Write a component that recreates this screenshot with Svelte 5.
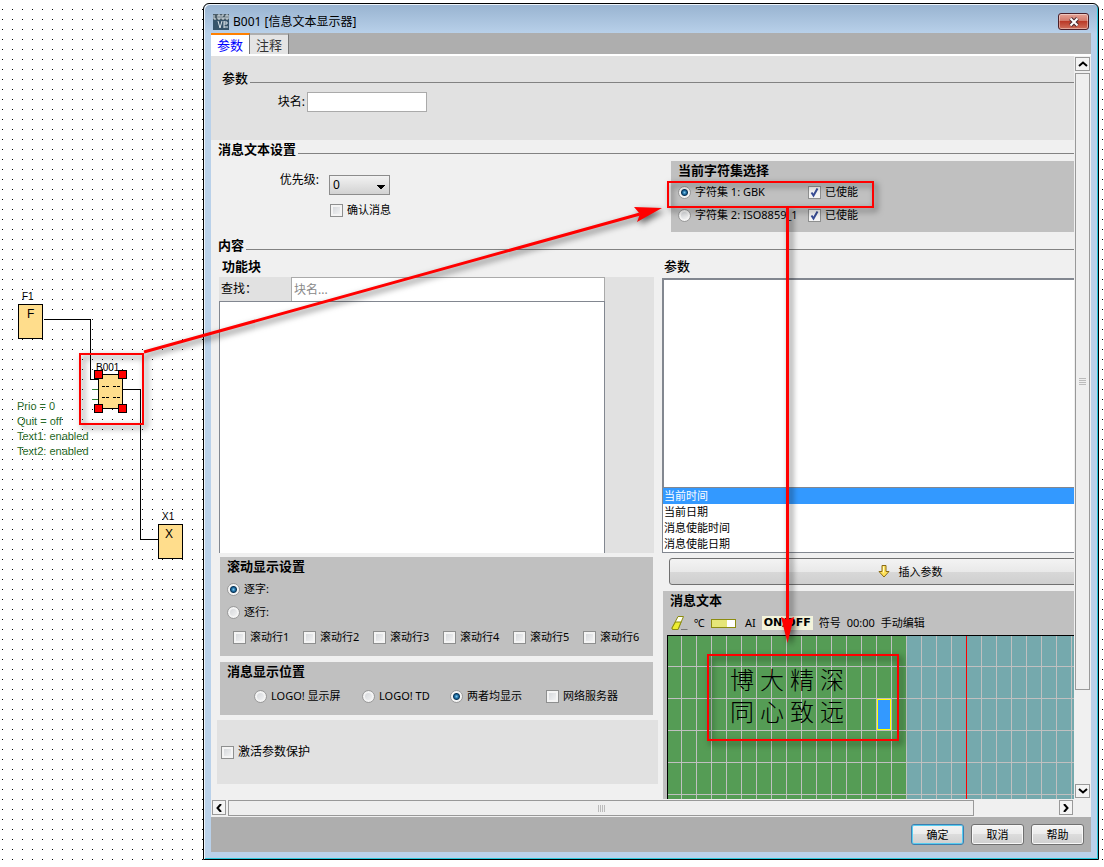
<script lang="ts">
    const parameters = ['当前时间', '当前日期', '消息使能时间', '消息使能日期'];
    const tickerLines = [1, 2, 3, 4, 5, 6];
    const lcdRows = ['博大精深', '同心致远'];
    const blockInfo = ['Prio = 0', 'Quit = off', 'Text1: enabled', 'Text2: enabled'];
    const charsets = [
        { id: 1, label: '字符集 1: GBK' },
        { id: 2, label: '字符集 2: ISO8859_1' }
    ];
    const handles = [
        [94, 370],
        [118, 370],
        [94, 404],
        [118, 404]
    ];

    let activeTab = 'params';
    let selected = parameters[0];
    let charset = 1;
    let enabled = [true, true];
    let tickerMode = 'char';
    let target = 'both';
</script>

<div class="desktop">
    <svg class="diagram" aria-hidden="true">
        <g fill="none" stroke="#000" shape-rendering="crispEdges">
            <path d="M43.5 319.5H90.5V379.5H98M123 389.5H140.5V539.5H158" />
            <path d="M92 389.5h6M92 399.5h6" stroke="#2f7d32" />
            <g fill="#ffdd8c">
                <rect x="18.5" y="304.5" width="24" height="34" />
                <rect x="98.5" y="374.5" width="24" height="34" />
                <rect x="158.5" y="524.5" width="24" height="34" />
            </g>
            <path d="M102 386.5h19M102 397.5h19" stroke-dasharray="3 1 3 4" />
        </g>
        <text x="22" y="300">F1</text>
        <text x="27" y="318" class="symbol">F</text>
        <text x="96" y="371">B001</text>
        <text x="162" y="520">X1</text>
        <text x="165" y="538" class="symbol">X</text>
        {#each handles as [x, y]}
            <rect x={x + 0.5} y={y + 0.5} width="8" height="8" fill="#f00" stroke="#000" />
        {/each}
        {#each blockInfo as line, i}
            <text x="17" y={410 + i * 15} class="info">{line}</text>
        {/each}
    </svg>

    <div class="dialog" role="dialog" aria-labelledby="dialog-title">
        <header class="titlebar">
            <svg class="logo" width="16" height="16" viewBox="0 0 16 16" aria-hidden="true">
                <rect width="16" height="16" fill="#36546a" />
                <path d="M0 0h16v6H0z" fill="#4b5d69" />
                <path
                    d="M1 1v4h2M5 1h2v4H5zM11 1H9v4h2V3M13 1h2v4h-2zM5 7l2 7 2-7M11 7v7M11 8h3v2h-3M11 13h4"
                    fill="none"
                    stroke="#dce5ea"
                />
            </svg>
            <span id="dialog-title">B001 [信息文本显示器]</span>
            <button class="close" aria-label="关闭">
                <svg width="12" height="10" viewBox="0 0 12 10">
                    <path d="M2.5 1.5l7 7M9.5 1.5l-7 7" stroke="#4a2a30" stroke-width="4" />
                    <path d="M2.5 1.5l7 7M9.5 1.5l-7 7" stroke="#fff" stroke-width="2" />
                </svg>
            </button>
        </header>

        <nav class="tabs">
            <button class:active={activeTab === 'params'} on:click={() => (activeTab = 'params')}>参数</button>
            <button class:active={activeTab === 'notes'} on:click={() => (activeTab = 'notes')}>注释</button>
        </nav>

        <div class="pane">
            <main class="view">
                <section class="general">
                    <h2 class="rule plain">参数</h2>
                    <div class="name-row">
                        <label for="block-name">块名:</label>
                        <input id="block-name" type="text" />
                    </div>
                </section>

                <h2 class="rule first">消息文本设置</h2>
                <div class="settings">
                    <div class="priority">
                        <div class="priority-row">
                            <label for="prio">优先级:</label>
                            <select id="prio">
                                <option>0</option>
                                <option>1</option>
                                <option>2</option>
                            </select>
                        </div>
                        <label class="opt confirm"><input type="checkbox" />确认消息</label>
                    </div>
                    <section class="panel charset">
                        <h3>当前字符集选择</h3>
                        {#each charsets as set, i}
                            <div class="charset-row">
                                <label class="opt">
                                    <input type="radio" name="charset" value={set.id} bind:group={charset} />{set.label}
                                </label>
                                <label class="opt"><input type="checkbox" bind:checked={enabled[i]} />已使能</label>
                            </div>
                        {/each}
                    </section>
                </div>

                <h2 class="rule content-title">内容</h2>
                <div class="columns">
                    <div class="left">
                        <h3 class="list-title">功能块</h3>
                        <div class="blocks">
                            <label for="search">查找：</label>
                            <input id="search" type="text" placeholder="块名..." />
                            <div class="block-list"></div>
                        </div>

                        <section class="panel ticker">
                            <h3>滚动显示设置</h3>
                            <label class="opt mode">
                                <input type="radio" name="ticker" value="char" bind:group={tickerMode} />逐字:
                            </label>
                            <label class="opt mode">
                                <input type="radio" name="ticker" value="line" bind:group={tickerMode} />逐行:
                            </label>
                            <div class="ticker-lines">
                                {#each tickerLines as n}
                                    <label class="opt"><input type="checkbox" />滚动行{n}</label>
                                {/each}
                            </div>
                        </section>

                        <section class="panel target">
                            <h3>消息显示位置</h3>
                            <div class="target-row">
                                <label class="opt">
                                    <input type="radio" name="target" value="logo" bind:group={target} />LOGO! 显示屏
                                </label>
                                <label class="opt">
                                    <input type="radio" name="target" value="td" bind:group={target} />LOGO! TD
                                </label>
                                <label class="opt">
                                    <input type="radio" name="target" value="both" bind:group={target} />两者均显示
                                </label>
                                <label class="opt"><input type="checkbox" />网络服务器</label>
                            </div>
                        </section>

                        <div class="protect">
                            <label class="opt"><input type="checkbox" />激活参数保护</label>
                        </div>
                    </div>

                    <div class="right">
                        <h3 class="list-title plain">参数</h3>
                        <div class="param-space"></div>
                        <div class="param-list">
                            {#each parameters as p}
                                <button class:selected={selected === p} on:click={() => (selected = p)}>{p}</button>
                            {/each}
                        </div>
                        <button class="insert">
                            <svg width="12" height="13" viewBox="0 0 12 13" aria-hidden="true">
                                <path
                                    d="M4 .5h4v6h3L6 12 1 6.500h3z"
                                    fill="#ffe25a"
                                    stroke="#8a6a14"
                                    stroke-linejoin="round"
                                />
                                <path d="M5.500 1.500v6" stroke="#fffbd0" />
                            </svg>
                            插入参数
                        </button>

                        <section class="message">
                            <h3>消息文本</h3>
                            <div class="tools">
                                <button class="erase" aria-label="清除">
                                    <svg width="17" height="15" viewBox="0 0 17 15">
                                        <path d="M7 .5h5.500L7 13.500H1.500L1 12z" fill="#fffff0" stroke="#8c8c10" />
                                        <path d="M4.500 6h5.500L7 13.500H1.500L1 12z" fill="#eded30" stroke="#8c8c10" />
                                        <path d="M10 13.500h6.500" stroke="#777" />
                                    </svg>
                                </button>
                                <button class="unit">℃</button>
                                <button class="bar" aria-label="棒图">
                                    <svg width="25" height="9" viewBox="0 0 25 9">
                                        <rect x=".5" y=".5" width="24" height="8" fill="#fff" stroke="#8c8c10" />
                                        <rect x="1" y="1" width="15" height="7" fill="#e6e678" />
                                    </svg>
                                </button>
                                <button class="ai">AI</button>
                                <button class="onoff">ON/OFF</button>
                                <button class="sign">符号</button>
                                <button class="time">00:00</button>
                                <button>手动编辑</button>
                            </div>
                            <div class="lcd">
                                {#each lcdRows as row}
                                    <div class="lcd-row">
                                        {#each row as ch}<span>{ch}</span>{/each}
                                    </div>
                                {/each}
                                <i class="cursor"></i>
                            </div>
                        </section>
                    </div>
                </div>
            </main>

            <div class="scroll vertical">
                <button aria-label="向上">
                    <svg width="10" height="6" viewBox="0 0 10 6"><path d="M1 5l4-3.500L9 5" /></svg>
                </button>
                <div class="track"><div class="thumb"><i></i></div></div>
                <button aria-label="向下">
                    <svg width="10" height="6" viewBox="0 0 10 6"><path d="M1 1l4 3.500L9 1" /></svg>
                </button>
            </div>
            <div class="scroll horizontal">
                <button aria-label="向左">
                    <svg width="6" height="8" viewBox="0 0 6 8"><path d="M5 0L1.500 4 5 8" /></svg>
                </button>
                <div class="track"><div class="thumb"><i></i></div></div>
                <button aria-label="向右">
                    <svg width="6" height="8" viewBox="0 0 6 8"><path d="M1 0l3.500 4L1 8" /></svg>
                </button>
            </div>
        </div>

        <footer class="actions">
            <button class="default">确定</button>
            <button>取消</button>
            <button>帮助</button>
        </footer>
    </div>

    <svg class="callouts" aria-hidden="true">
        <g fill="none" stroke="#f00" stroke-width="2">
            <rect x="80" y="354" width="63" height="70" />
            <rect x="668" y="182" width="205" height="25" />
            <rect x="708" y="655" width="190" height="85" />
            <path d="M144 352L640 214M787.5 208V622" stroke-width="3" />
        </g>
        <path d="M662 208L637 222L640 214L634 207Z" fill="#f00" />
        <path d="M787.500 643L781 617L787.500 620L794 617Z" fill="#f00" />
    </svg>
</div>

<style>
    :global(body) {
        background: #fff;
    }

    .desktop {
        position: relative;
        display: flex;
        min-height: 100vh;
        box-sizing: border-box;
        padding: 3px 5px 7px 203px;
        overflow: hidden;
        background: conic-gradient(from 270deg at 1px 1px, #000 90deg, transparent 0) 2px 9px / 10px 10px;
        font: 11px/16px 'Noto Sans', 'Noto Sans CJK SC', sans-serif;
        color: #000;
    }

    .diagram,
    .callouts {
        position: absolute;
        left: 0;
        top: 0;
        width: 100%;
        height: 100%;
        pointer-events: none;
    }

    .callouts {
        filter: drop-shadow(3px 3px 3px rgba(0, 0, 0, 0.6));
    }

    .diagram text {
        font: 10px 'Liberation Sans', sans-serif;
    }

    .diagram .symbol {
        font-size: 12px;
    }

    .diagram .info {
        font-size: 11px;
        fill: #2a6b2a;
    }

    .dialog {
        position: relative;
        flex: 1;
        min-width: 0;
        display: flex;
        flex-direction: column;
        padding: 0 7px 7px;
        border: 1px solid #000;
        border-radius: 6px 6px 0 0;
        background: linear-gradient(#98b3d0, #b9d1ea 30px);
        box-shadow: inset 1px 1px #eef5fc, inset -1px -1px #28c8dc;
    }

    button,
    input,
    select {
        box-sizing: border-box;
        margin: 0;
        padding: 0;
        font: inherit;
        color: inherit;
    }

    button {
        border: 0;
        background: none;
        white-space: nowrap;
    }

    h2,
    h3 {
        margin: 0;
        font-size: 13px;
        line-height: 16px;
        font-weight: 700;
    }

    .titlebar {
        display: flex;
        align-items: center;
        gap: 4px;
        height: 29px;
        padding: 6px 2px 0;
        box-sizing: border-box;
        font-size: 12px;
    }

    .close {
        display: grid;
        place-items: center;
        width: 31px;
        height: 17px;
        margin-left: auto;
        border: 1px solid #4b1f28;
        border-radius: 3px;
        background: linear-gradient(#e6a396, #d27a6b 45%, #ba3a28 50%, #d0705c);
        box-shadow: inset 0 0 0 1px rgba(255, 255, 255, 0.4);
    }

    .tabs {
        display: flex;
        height: 21px;
        border-bottom: 2px solid #fff;
        background: #aeaeae;
    }

    .tabs button {
        width: 39px;
        border-top: 2px solid #aeaeae;
        border-right: 1px solid #777;
        background: #e4e4e4;
        font-size: 13px;
        line-height: 16px;
        color: #333;
    }

    .tabs .active {
        border-top-color: #ff8000;
        background: #fff;
        color: #00f;
    }

    .pane {
        flex: 1;
        display: grid;
        grid-template-columns: minmax(0, 1fr) 17px;
        grid-template-rows: 1fr 18px;
        background: #f0f0f0;
    }

    .view {
        display: flex;
        flex-direction: column;
        overflow: hidden;
    }

    .general {
        padding: 14px 0 28px;
        background: #e1e1e1;
    }

    .rule {
        display: flex;
        align-items: center;
        gap: 2px;
        padding-left: 7px;
    }

    .rule::after {
        content: '';
        flex: 1;
        height: 1px;
        margin-top: 9px;
        background: #828282;
    }

    .plain {
        font-weight: 500;
    }

    .general .rule {
        padding-left: 11px;
    }

    .rule.first {
        margin-top: 1px;
    }

    .name-row {
        display: flex;
        align-items: center;
        gap: 2px;
        margin-top: 6px;
        font-size: 12px;
    }

    .name-row label {
        width: 94px;
        text-align: right;
    }

    .name-row input {
        width: 120px;
        height: 20px;
        border: 1px solid #aaa;
        background: #fff;
    }

    .settings {
        display: grid;
        grid-template-columns: 460px minmax(0, 1fr);
    }

    .priority {
        padding-top: 15px;
    }

    .priority-row {
        display: flex;
        align-items: flex-start;
        gap: 10px;
        font-size: 12px;
    }

    .priority-row label {
        width: 108px;
        text-align: right;
    }

    select {
        appearance: none;
        width: 61px;
        height: 20px;
        margin-top: 3px;
        padding-left: 3px;
        border: 1px solid #8c8c8c;
        border-radius: 0;
        background:
            conic-gradient(from 315deg at 4px 4px, #000 90deg, transparent 0) 47px 9px / 8px 4px no-repeat,
            linear-gradient(#f2f2f2, #d2d2d2);
    }

    .opt {
        display: flex;
        align-items: center;
        gap: 4px;
        white-space: nowrap;
    }

    .confirm {
        margin: 7px 0 0 119px;
    }

    input[type='checkbox'],
    input[type='radio'] {
        appearance: none;
        flex: none;
        width: 13px;
        height: 13px;
        border: 1px solid #8e8f8f;
        background: linear-gradient(135deg, #cfd2d6, #f8f8f8);
        box-shadow: inset 0 0 0 2px #f4f4f4;
    }

    input[type='checkbox']:checked {
        background: #f4f4f4
            url("data:image/svg+xml,%3Csvg xmlns='http://www.w3.org/2000/svg' viewBox='0 0 11 11'%3E%3Cpath d='M2.500 5.500l2 3 4-7' fill='none' stroke='%23384c94' stroke-width='2'/%3E%3C/svg%3E");
        box-shadow: none;
    }

    input[type='radio'] {
        border-radius: 50%;
        border-color: #9a9a9a;
    }

    input[type='radio']:checked {
        background: radial-gradient(circle, #7cc8ee 0, #17649a 2px, #0c3556 3px, #f4f4f4 4px);
        box-shadow: none;
    }

    .panel {
        background: #c0c0c0;
    }

    .charset {
        margin-top: 4px;
        padding: 1px 7px 9px;
    }

    .charset-row {
        display: grid;
        grid-template-columns: 130px auto;
        margin-top: 7px;
    }

    .charset h3 + .charset-row {
        margin-top: 6px;
    }

    .content-title {
        margin-top: 5px;
    }

    .columns {
        flex: 1;
        display: grid;
        grid-template-columns: 451px minmax(0, 1fr);
    }

    .list-title {
        margin-top: 5px;
    }

    .left .list-title {
        padding-left: 11px;
    }

    .right .list-title {
        padding-left: 2px;
    }

    .blocks {
        display: grid;
        grid-template-columns: 72px minmax(0, 1fr);
        grid-template-rows: 24px 252px;
        align-items: center;
        margin: 3px 8px 0;
        padding-right: 49px;
        background: #e1e1e1;
        font-size: 12px;
    }

    .blocks label {
        padding-left: 2px;
    }

    .blocks input {
        height: 24px;
        padding-left: 2px;
        border: 1px solid #aaa;
        border-bottom: 0;
        background: #fff;
    }

    .blocks input::placeholder {
        color: #888;
    }

    .block-list {
        grid-column: 1 / 3;
        align-self: stretch;
        border: 1px solid #828790;
        border-bottom: 0;
        background: #fff;
    }

    .ticker,
    .target {
        margin: 4px 9px 0;
        padding: 1px 7px 11px;
    }

    .target {
        margin-top: 6px;
    }

    .mode {
        margin-top: 7px;
    }

    .ticker-lines {
        display: grid;
        grid-template-columns: repeat(6, 70px);
        margin: 9px 0 0 6px;
    }

    .target-row {
        display: grid;
        grid-template-columns: 108px 88px 96px auto;
        margin: 9px 0 0 27px;
    }

    .protect {
        margin: 5px 4px 15px 6px;
        padding: 24px 4px;
        background: #e1e1e1;
        font-size: 12px;
    }

    .right {
        display: flex;
        flex-direction: column;
    }

    .param-space {
        height: 209px;
        margin-top: 4px;
        box-sizing: border-box;
        border: solid #828790;
        border-width: 2px 0 0 2px;
        background: #fff;
    }

    .param-list {
        display: flex;
        flex-direction: column;
        border: solid #828790;
        border-width: 1px 0 1px 1px;
        background: #fff;
    }

    .param-list button {
        height: 16px;
        padding-left: 1px;
        text-align: left;
    }

    .param-list .selected {
        background: #39f;
        color: #fff;
    }

    /* runs on under the edge of the scrolled view */
    .insert {
        display: flex;
        align-items: center;
        justify-content: center;
        gap: 9px;
        height: 27px;
        margin: 5px -77px 0 7px;
        border: 1px solid #707070;
        border-radius: 3px;
        background: linear-gradient(#f3f3f3, #e9e9e9 50%, #d8d8d8 50%, #cfcfcf);
    }

    .message {
        flex: 1;
        display: flex;
        flex-direction: column;
        margin: 6px 0 0 1px;
        padding: 1px 0 0 4px;
        background: #c0c0c0;
    }

    .message h3 {
        padding-left: 3px;
    }

    .tools {
        display: flex;
        align-items: center;
        gap: 6px;
        height: 16px;
        margin: 7px 0 4px;
        padding-left: 4px;
    }

    .tools svg {
        display: block;
    }

    .unit {
        width: 11px;
    }

    .bar {
        margin-right: 3px;
    }

    .onoff {
        padding: 0 2px;
        background: #f4f4dc;
        font: 700 11px/14px 'DejaVu Sans', sans-serif;
    }

    .lcd {
        position: relative;
        flex: 1;
        min-height: 135px;
        padding: 28px 0 0 59px;
        border: solid #000;
        border-width: 1px 0 0 1px;
        background:
            linear-gradient(#f00, #f00) 299px 0 / 1px 100% no-repeat,
            linear-gradient(90deg, transparent 14px, #c0c0c0 14px) 0 0 / 15px 32px,
            linear-gradient(transparent 31px, #c0c0c0 31px) 0 0 / 15px 32px,
            linear-gradient(90deg, #559c55 239px, #75a9ad 239px);
        background-origin: border-box;
    }

    .lcd-row {
        display: flex;
        height: 32px;
        font-size: 24px;
        line-height: 30px;
        font-weight: 300;
    }

    .lcd-row span {
        width: 30px;
        text-align: center;
        font-family: 'Noto Sans CJK SC', sans-serif;
    }

    .cursor {
        position: absolute;
        left: 209px;
        top: 63px;
        width: 12px;
        height: 29px;
        border: 1px solid #ff0;
        background: #39f;
    }

    .scroll {
        display: flex;
        gap: 2px;
        padding: 1px;
        box-sizing: border-box;
    }

    .scroll button {
        flex: none;
        display: grid;
        place-items: center;
        width: 15px;
        height: 14px;
        border: 1px solid #999;
        background: #f4f4f4;
    }

    .scroll path {
        fill: none;
        stroke: #000;
        stroke-width: 2;
    }

    .track {
        flex: 1;
        display: flex;
    }

    .thumb {
        display: grid;
        place-items: center;
        box-sizing: border-box;
        border: 1px solid #999;
        background: #efefef;
    }

    .vertical {
        flex-direction: column;
    }

    .vertical .track {
        flex-direction: column;
    }

    .vertical .thumb {
        width: 15px;
        height: 87%;
    }

    .vertical i {
        width: 7px;
        height: 7px;
        background: repeating-linear-gradient(#bbb 0 1px, transparent 1px 2px);
    }

    .horizontal button {
        width: 14px;
        height: 15px;
    }

    .horizontal .thumb {
        width: 90%;
        height: 16px;
    }

    .horizontal i {
        width: 7px;
        height: 7px;
        background: repeating-linear-gradient(90deg, #bbb 0 1px, transparent 1px 2px);
    }

    .actions {
        display: flex;
        justify-content: flex-end;
        gap: 7px;
        padding: 7px;
        background: #aeaeae;
    }

    .actions button {
        width: 53px;
        height: 21px;
        border: 1px solid #707070;
        border-radius: 3px;
        background: linear-gradient(#f4f4f4, #ebebeb 50%, #dcdcdc 50%, #d0d0d0);
        box-shadow: inset 0 0 0 1px #f8f8f8;
    }

    .actions .default {
        border-color: #3c7fb1;
        box-shadow: inset 0 0 0 1px #58cdf0;
    }
</style>
